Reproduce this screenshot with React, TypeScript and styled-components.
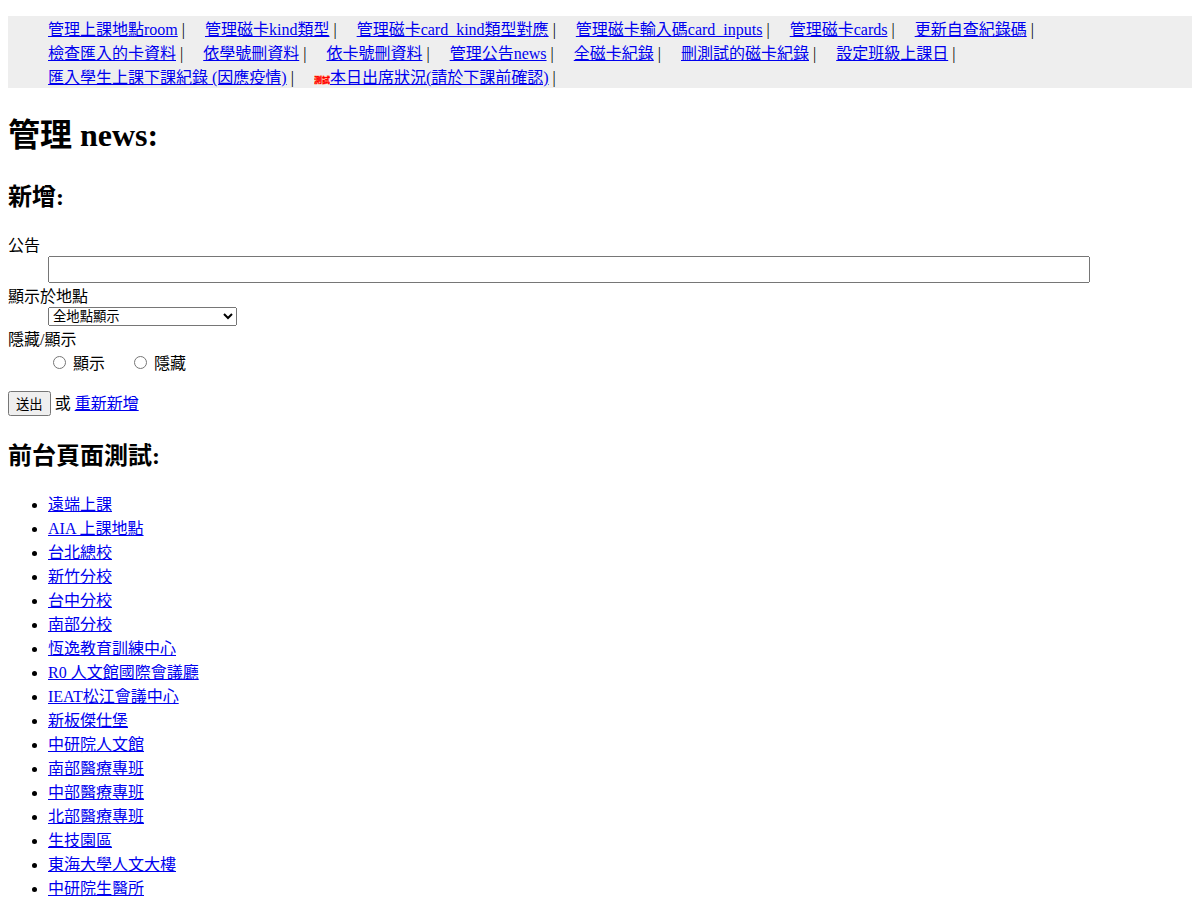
import React from "react";
import styled, { createGlobalStyle } from "styled-components";

const FONT = `"Liberation Serif", "Noto Sans CJK JP", serif`;

const Global = createGlobalStyle`
  body {
    margin: 8px;
    font-family: "Liberation Serif", "Noto Sans CJK JP", serif;
    font-size: 16px;
    color: #000;
    background: #fff;
  }
`;

const Menu = styled.ul`
  margin: 8px 0 16px;
  padding: 0 20px 0 40px;
  list-style: none;
  background: #eee;
`;
const MenuItem = styled.li`
  display: inline-block;
  margin-right: 20px;
  white-space: nowrap;
`;
const Badge = styled.svg`
  width: 16px;
  height: 11px;
  vertical-align: -2px;
`;
const BadgeText = styled.text`
  font-family: "Noto Sans CJK TC", sans-serif;
  font-size: 8px;
  font-weight: 900;
  fill: #f00;
  stroke: #ffb090;
  stroke-width: 1px;
  paint-order: stroke;
`;
const Title = styled.h1`
  font-size: 32px;
  font-weight: bold;
  margin: 21.44px 0;
`;
const Heading = styled.h2`
  font-size: 24px;
  font-weight: bold;
  margin: 19.92px 0;
`;
const FormList = styled.dl`
  margin: 16px 0;
`;
const Label = styled.dt`
  display: block;
`;
const Field = styled.dd`
  margin: 0 0 0 40px;
`;
const TextInput = styled.input`
  width: 1042px;
  height: 27px;
  box-sizing: border-box;
  font-size: 16px;
  vertical-align: top;
`;
const Select = styled.select`
  width: 189px;
  height: 19px;
  font-family: ${FONT};
  font-size: 13.333px;
  vertical-align: top;
`;
const RadioLabel = styled.label`
  margin-right: 20px;
`;
const Actions = styled.p`
  margin: 16px 0;
`;
const Submit = styled.button`
  font-family: ${FONT};
  font-size: 13.333px;
`;
const TestList = styled.ul`
  margin: 16px 0;
  padding-left: 40px;
`;

const menu = [
  "管理上課地點room", "管理磁卡kind類型", "管理磁卡card_kind類型對應", "管理磁卡輸入碼card_inputs",
  "管理磁卡cards", "更新自查紀錄碼", "檢查匯入的卡資料", "依學號刪資料", "依卡號刪資料", "管理公告news",
  "全磁卡紀錄", "刪測試的磁卡紀錄", "設定班級上課日", "匯入學生上課下課紀錄 (因應疫情)",
];
const places = [
  "遠端上課", "AIA 上課地點", "台北總校", "新竹分校", "台中分校", "南部分校", "恆逸教育訓練中心",
  "R0 人文館國際會議廳", "IEAT松江會議中心", "新板傑仕堡", "中研院人文館", "南部醫療專班", "中部醫療專班",
  "北部醫療專班", "生技園區", "東海大學人文大樓", "中研院生醫所",
];

export default function App() {
  return (
    <>
      <Global />
      <Menu>
        {menu.map((m) => (
          <MenuItem key={m}>
            <a href="#">{m}</a> |
          </MenuItem>
        ))}
        <MenuItem>
          <a href="#">
            <Badge viewBox="0 0 16 11" aria-hidden="true">
              <BadgeText x="0" y="9">測試</BadgeText>
            </Badge>
            本日出席狀況(請於下課前確認)
          </a>{" "}
          |
        </MenuItem>
      </Menu>
      <Title>管理 news:</Title>
      <Heading>新增:</Heading>
      <form>
        <FormList>
          <Label>公告</Label>
          <Field>
            <TextInput type="text" />
          </Field>
          <Label>顯示於地點</Label>
          <Field>
            <Select defaultValue="all">
              <option value="all">全地點顯示</option>
            </Select>
          </Field>
          <Label>隱藏/顯示</Label>
          <Field>
            <RadioLabel>
              <input type="radio" name="vis" /> 顯示
            </RadioLabel>{" "}
            <RadioLabel>
              <input type="radio" name="vis" /> 隱藏
            </RadioLabel>
          </Field>
        </FormList>
        <Actions>
          <Submit type="button">送出</Submit> 或 <a href="#">重新新增</a>
        </Actions>
      </form>
      <Heading>前台頁面測試:</Heading>
      <TestList>
        {places.map((p) => (
          <li key={p}>
            <a href="#">{p}</a>
          </li>
        ))}
      </TestList>
    </>
  );
}
